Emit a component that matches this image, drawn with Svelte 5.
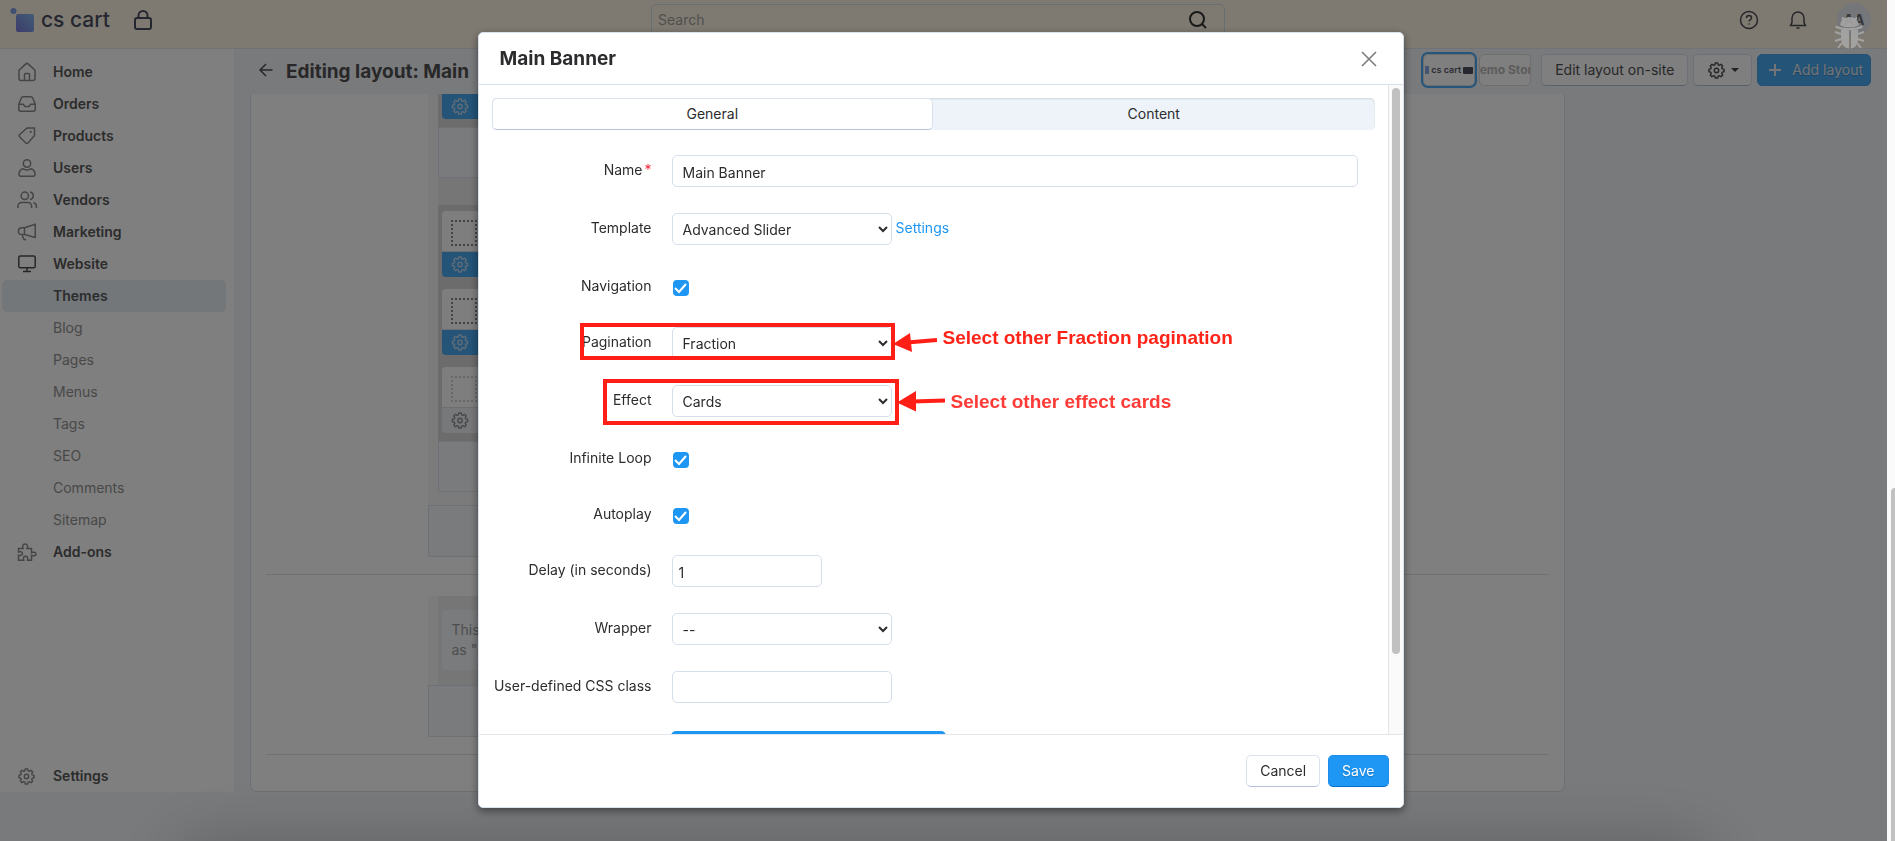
<script>
  const menu = [
    { label: 'Home', icon: 'home' },
    { label: 'Orders', icon: 'inbox' },
    { label: 'Products', icon: 'tag' },
    { label: 'Users', icon: 'user' },
    { label: 'Vendors', icon: 'users' },
    { label: 'Marketing', icon: 'horn' },
    { label: 'Website', icon: 'screen', dark: true },
    { label: 'Themes', sub: true, active: true },
    { label: 'Blog', sub: true },
    { label: 'Pages', sub: true },
    { label: 'Menus', sub: true },
    { label: 'Tags', sub: true },
    { label: 'SEO', sub: true },
    { label: 'Comments', sub: true },
    { label: 'Sitemap', sub: true },
    { label: 'Add-ons', icon: 'puzzle' }
  ];

  let tab = $state('General');
  let name = $state('Main Banner');
  let delay = $state('1');
  let cssClass = $state('');
  let navigation = $state(true);
  let loop = $state(true);
  let autoplay = $state(true);
</script>

{#snippet gear()}
  <svg class="gear" viewBox="0 0 18 18" aria-hidden="true">
    <path d="M7.3 2.9 7.7 1h2.6l.4 1.9 1.4.6 1.7-1.1 1.8 1.8-1.1 1.7.6 1.4 1.9.4v2.6l-1.9.4-.6 1.4 1.1 1.7-1.8 1.8-1.7-1.1-1.4.6-.4 1.9H7.7l-.4-1.9-1.4-.6-1.7 1.1-1.8-1.8 1.1-1.7-.6-1.4L1 10.300V7.700l1.900-.4.6-1.400-1.100-1.700 1.800-1.800 1.700 1.100z" />
    <circle cx="9" cy="9" r="2.300" />
  </svg>
{/snippet}

{#snippet chevron()}
  <svg class="chevron" viewBox="0 0 10 6" aria-hidden="true"><path d="m1 1 4 4 4-4" /></svg>
{/snippet}

{#snippet menuIcon(kind)}
  <svg class="menu-icon" viewBox="0 0 18 18" aria-hidden="true">
    {#if kind === 'home'}
      <path d="M1 7.300 7.600 1.100a2 2 0 0 1 2.800 0L17 7.300v8.200a2 2 0 0 1-2 2H3a2 2 0 0 1-2-2z" />
      <path d="M6.500 17.500v-6a1 1 0 0 1 1-1h3a1 1 0 0 1 1 1v6" />
    {:else if kind === 'inbox'}
      <path d="M.8 9.200 3.300 3a2 2 0 0 1 1.800-1.200h7.800A2 2 0 0 1 14.700 3l2.500 6.200v5a2 2 0 0 1-2 2H2.800a2 2 0 0 1-2-2z" />
      <path d="M.8 9.200h4.400c.8 0 .8 2.300 2.300 2.300h3c1.500 0 1.500-2.300 2.300-2.300h4.400" />
    {:else if kind === 'tag'}
      <path d="M9 1h7.500v7.500L10 16a1.500 1.500 0 0 1-2.200 0L1.500 9.800a1.500 1.500 0 0 1 0-2.100z" />
      <circle class="solid" cx="12.700" cy="4.900" r="1.100" />
    {:else if kind === 'user'}
      <circle cx="9" cy="4.500" r="3.700" />
      <path d="M2.800 17.200c-3.300 0-2-6.700 2.400-7.400 2 1.700 5.600 1.700 7.600 0 4.400.7 5.700 7.400 2.400 7.400z" />
    {:else if kind === 'users'}
      <circle cx="6.800" cy="4.800" r="3.700" />
      <path d="M0 17v-2a3.500 3.500 0 0 1 3.500-3.500h6.600a3.500 3.500 0 0 1 3.500 3.500v2M12 1.100c4.400.7 4.400 6.700 0 7.400M15.500 11.800A3.600 3.600 0 0 1 18.400 15v2" />
    {:else if kind === 'horn'}
      <path d="M6.500 4.800 17.200 1.300v13.200L6.500 11.500zM6.500 4.800H3.800a3.300 3.300 0 0 0 0 6.700h2.700zM4 11.500l1.500 4.200a2 2 0 0 0 2.600.6" />
    {:else if kind === 'screen'}
      <rect x=".8" y="1" width="16.400" height="11.800" rx="1.600" />
      <path d="M9 12.800v3.500M5 16.500h8" />
    {:else}
      <path d="M.5 5.500h4.600c-.7-1.200-1-4.500 2-4.500s2.700 3.300 2 4.500h4.400v4.300c1.200-.7 4.500-1 4.500 1.200s-3.300 2-4.500 1.300v4.900H9.500c.8-2.900-.2-3.900-1.900-3.900s-2.700 1-1.900 3.900H.5v-5c2.700.8 4-.3 4-1.700s-1.300-2.300-4-1.500z" />
    {/if}
  </svg>
{/snippet}

{#snippet block(muted)}
  <div class="block" class:muted>
    <div class="block-top"><span class="dots"></span></div>
    <div class="block-bar">{@render gear()}</div>
  </div>
{/snippet}

<div class="page">
  <header class="topbar">
    <div class="brand">
      <svg class="logo" viewBox="0 0 25 26" aria-hidden="true">
        <defs>
          <linearGradient id="logo-fill" x1="0" y1="1" x2="1" y2="0">
            <stop offset="0" stop-color="#7a78d8" />
            <stop offset="1" stop-color="#84b8e8" />
          </linearGradient>
        </defs>
        <circle cx="4.500" cy="4" r="3" fill="#809fe4" />
        <rect x="7" y="7" width="18" height="18" rx="2" fill="url(#logo-fill)" />
      </svg>
      <span class="brand-name">cs cart</span>
      <svg class="lock" viewBox="0 0 18 20" aria-hidden="true">
        <rect x="1" y="8" width="16" height="11" rx="2" />
        <path d="M4.500 8V5.500a4.500 4.500 0 0 1 9 0V8" />
      </svg>
    </div>
    <div class="search">
      <input type="search" placeholder="Search" aria-label="Search" />
      <svg viewBox="0 0 18 18" aria-hidden="true"><circle cx="8" cy="8" r="7" /><path d="m13 13 4 4" /></svg>
    </div>
    <div class="tools">
      <svg viewBox="0 0 20 20" aria-hidden="true">
        <circle cx="10" cy="10" r="8.500" />
        <path d="M7.500 8c0-3.200 5-3.200 5 0 0 1.700-2.500 1.800-2.500 3.600" /><circle class="solid" cx="10" cy="14" r=".8" />
      </svg>
      <svg viewBox="0 0 20 20" aria-hidden="true">
        <path d="M2.500 15.500 4 12.500V8a6 6 0 0 1 12 0v4.500l1.500 3zM8.500 18h3" />
      </svg>
      <span class="avatar">AA</span>
    </div>
  </header>

  <div class="columns">
    <nav class="sidebar">
      {#each menu as item}
        <a href="#top" class="item" class:sub={item.sub} class:active={item.active} class:dark={item.dark}>
          <span class="slot">{#if item.icon}{@render menuIcon(item.icon)}{/if}</span>{item.label}
        </a>
      {/each}
      <a href="#top" class="item last"><span class="slot">{@render gear()}</span>Settings</a>
    </nav>

    <main>
      <div class="actions">
        <svg class="back" viewBox="0 0 14 14" aria-hidden="true"><path d="M13.500 7H1m6-6L1 7l6 6" /></svg>
        <h1>Editing layout: Main</h1>
        <div class="buttons">
          <div class="thumbs">
            <button class="thumb selected"><i class="chip"></i><b>cs cart</b><i class="tagline"></i></button>
            <button class="thumb"><span>Demo Store</span></button>
          </div>
          <button class="btn">Edit layout on-site</button>
          <button class="btn tool" aria-label="Layout tools">{@render gear()}<i class="caret"></i></button>
          <button class="btn primary add">
            <svg viewBox="0 0 12 12" aria-hidden="true"><path d="M6 0v12M0 6h12" /></svg>Add layout
          </button>
        </div>
      </div>

      <div class="card">
        <section>
          <div class="container">
            <div class="grid">
              <div class="grid-body first"><div class="block-bar">{@render gear()}</div></div>
              <div class="strip"></div>
              <div class="space"></div>
              <div class="grid-body">
                {@render block(false)}
                {@render block(false)}
                {@render block(true)}
              </div>
              <div class="strip"></div>
            </div>
            <div class="strip end"></div>
          </div>
        </section>
        <section>
          <div class="container footer-area">
            <div class="grid"><p class="note">This<br />as "I</p></div>
            <div class="strip end"></div>
          </div>
        </section>
      </div>
    </main>
  </div>
  <div class="bottom-bar"></div>
</div>

<div class="overlay">
  <div class="modal" role="dialog" aria-labelledby="modal-title">
    <header class="modal-head">
      <h2 id="modal-title">Main Banner</h2>
      <button class="close" aria-label="Close"><svg viewBox="0 0 16 16"><path d="m1 1 14 14M15 1 1 15" /></svg></button>
    </header>

    <div class="modal-body">
      <div class="pane">
        <div class="tabs">
          {#each ['General', 'Content'] as label}
            <button class:current={tab === label} onclick={() => (tab = label)}>{label}</button>
          {/each}
        </div>

        <form>
          <div class="row">
            <label for="f-name">Name<span class="star">*</span></label>
            <input id="f-name" class="text wide" bind:value={name} />
          </div>
          <div class="row">
            <label for="f-template">Template</label>
            <div class="select"><select id="f-template"><option>Advanced Slider</option></select>{@render chevron()}</div>
            <a class="link" href="#top">Settings</a>
          </div>
          <div class="row short">
            <label for="f-nav">Navigation</label>
            <input id="f-nav" type="checkbox" bind:checked={navigation} />
          </div>
          <div class="row">
            <label for="f-pagination">Pagination</label>
            <div class="select"><select id="f-pagination"><option>Fraction</option></select>{@render chevron()}</div>
          </div>
          <div class="row">
            <label for="f-effect">Effect</label>
            <div class="select"><select id="f-effect"><option>Cards</option></select>{@render chevron()}</div>
          </div>
          <div class="row short">
            <label for="f-loop">Infinite Loop</label>
            <input id="f-loop" type="checkbox" bind:checked={loop} />
          </div>
          <div class="row short">
            <label for="f-auto">Autoplay</label>
            <input id="f-auto" type="checkbox" bind:checked={autoplay} />
          </div>
          <div class="row">
            <label for="f-delay">Delay (in seconds)</label>
            <input id="f-delay" class="text small" bind:value={delay} />
          </div>
          <div class="row">
            <label for="f-wrapper">Wrapper</label>
            <div class="select"><select id="f-wrapper"><option>--</option></select>{@render chevron()}</div>
          </div>
          <div class="row">
            <label for="f-class">User-defined CSS class</label>
            <input id="f-class" class="text" bind:value={cssClass} />
          </div>
          <button type="button" class="more" aria-label="More options"></button>

          <svg class="marks" viewBox="0 0 460 280" aria-hidden="true">
            <rect x="90" y="170" width="311" height="33" />
            <rect x="113" y="226" width="292" height="42" />
            <path d="M445 185 415 187.500M453 245.500 420 246.500" />
            <path class="tip" d="m401 189 17-11 2 19zM405 247.500l19-11.500v20.500z" />
          </svg>
          <p class="hint one">Select other Fraction pagination</p>
          <p class="hint two">Select other effect cards</p>
        </form>
      </div>
      <div class="track"><div class="thumb-bar"></div></div>
    </div>

    <footer class="modal-foot">
      <button class="btn">Cancel</button>
      <button class="btn primary">Save</button>
    </footer>
  </div>
</div>

<svg class="bug" viewBox="0 0 30 34" aria-hidden="true">
  <path class="body" d="M6 10C7 8 7 3.500 11 3c3-1.500 6-1.500 9 0 4 .5 4 5 5 7-5 3-14 3-19 0z" />
  <path d="M1.500 11.500c7 3.500 20 3.500 27 0M8 2.500l2 2M23 2.500l-2 2M7 19l-6-2M24 19l6-2M7 24l-6 2M24 24l6 2M8 28l-4 5M23 28l4 5" />
  <path class="body" d="M7 14c2.500.8 5 1.200 8 1.200V33.500C10 33 7 29 7 23zM24 14c-2 .8-4.500 1.200-7 1.200V33.500c4.500-.5 7-4.500 7-10.500z" />
</svg>
<div class="page-scroll"><div></div></div>

<style>
  :global(body) {
    background: #f2f5f9;
    overflow: hidden;
  }
  :global(#app) {
    font: 14px/20px Inter, 'Noto Sans', sans-serif;
    color: #2c2c2e;
  }
  * { box-sizing: border-box; }
  svg { display: block; fill: none; stroke: currentColor; flex: none; overflow: visible; }
  .solid { fill: currentColor; stroke: none; }
  button, input, select { font: inherit; color: inherit; margin: 0; }
  h1, h2, p { margin: 0; }
  h1, h2 { font-size: 19px; line-height: 28px; font-weight: 700; }
  a { text-decoration: none; color: inherit; }

  .page { height: 100vh; margin-right: 8px; overflow: hidden; position: relative; }
  .topbar {
    display: grid;
    grid-template-columns: 1fr 574px 1fr;
    height: 49px;
    padding: 0 16px 0 5px;
    background: #fdf5e5;
    border-bottom: 1px solid #dfe4ee;
  }
  .brand { display: flex; align-items: flex-start; padding: 7px 0 0 4px; color: #4b4e60; }
  .logo { width: 25px; height: 26px; stroke: none; }
  .brand-name { font-size: 21px; line-height: 26px; font-weight: 500; margin-left: 7px; color: #4b4e60; }
  .lock { width: 18px; height: 20px; margin: 3px 0 0 24px; stroke-width: 2; }
  .search { height: 32px; margin-top: 4px; display: flex; align-items: center; border: 1px solid #d6dbe8; border-radius: 5px; padding: 0 17px 0 6px; }
  .search input { flex: 1; border: 0; padding: 0; background: none; outline: 0; }
  .search input::placeholder { color: #a3a09a; opacity: 1; }
  .search svg { width: 18px; height: 18px; stroke-width: 2; color: #333; }
  .tools { display: flex; justify-content: flex-end; align-items: flex-start; gap: 29px; padding-top: 3px; color: #4c4c50; }
  .tools svg { width: 20px; height: 20px; margin-top: 7px; stroke-width: 1.500; }
  .avatar { width: 34px; height: 34px; border-radius: 50%; background: #e9edf3; font-size: 14px; line-height: 34px; font-weight: 700; text-align: center; color: #707070; }

  .columns { display: flex; align-items: flex-start; height: calc(100% - 49px); }
  .sidebar { width: 234px; height: calc(100% - 49px); flex: none; background: #fff; padding: 7px 8px 0 2px; display: flex; flex-direction: column; }
  .item { height: 32px; line-height: 32px; display: flex; align-items: center; padding-left: 16px; gap: 17px; border-radius: 5px; font-weight: 600; color: #585858; }
  .slot { width: 18px; color: #8b8b8b; }
  .dark .slot { color: #4c4c4c; }
  .menu-icon { width: 18px; height: 18px; stroke-width: 1.500; }
  .gear { width: 18px; height: 18px; stroke-width: 1.500; stroke-linejoin: round; }
  .slot .gear { width: 17px; height: 17px; }
  .sub { font-weight: 400; color: #919191; }
  .active { font-weight: 600; color: #585858; background: #e6eef5; }
  .last { margin-top: auto; }

  main { flex: 1; min-width: 0; height: 100%; padding: 0 16px; }
  .actions { height: 45px; display: flex; align-items: flex-start; padding-left: 9px; color: #505052; }
  .back { width: 14px; height: 14px; stroke-width: 1.500; margin: 14px 13px 0 0; }
  h1 { margin-top: 9px; }
  .buttons { margin: 5px 0 0 auto; display: flex; gap: 5px; }
  .thumbs { display: flex; gap: 4px; margin-right: 5px; }
  .thumb { width: 52px; height: 32px; padding: 0; border: 1px solid #dcdcdc; border-radius: 5px; background: #fff; display: flex; align-items: center; justify-content: center; overflow: hidden; color: #b8b8b8; font-size: 12px; font-weight: 700; white-space: nowrap; }
  .thumb.selected { outline: 2px solid #4aabf4; color: #555869; font-size: 9px; gap: 2px; }
  .thumb b { font-weight: 600; }
  .chip { width: 4px; height: 8px; flex: none; background: #88abe8; }
  .tagline { width: 10px; height: 7px; flex: none; border-radius: 1px; background: #4c4f5f; }

  .btn { height: 32px; padding: 0 13px; background: #fff; border: 1px solid #dbe1ee; border-bottom-color: #b4bfdd; border-radius: 5px; display: flex; align-items: center; white-space: nowrap; }
  .btn.primary { background: #1e96f3; border-color: #1f8bea; border-bottom-color: #0a6fd4; color: #fff; text-shadow: 0 1px 1px #0003; }
  .tool { padding: 0 12px 0 14px; gap: 6px; }
  .tool .gear { stroke-width: 1.500; width: 17px; height: 17px; }
  .caret { border: 4px solid transparent; border-top-color: #444; border-bottom: 0; }
  .actions .btn.primary { background: #48a8f0; border-color: #48a0e8; margin: 0; color: #e4e8ec; }
  .add { padding: 0 7px 0 11px; gap: 11px; }
  .add svg { width: 12px; height: 12px; stroke-width: 2; }

  .card { max-width: 1315px; height: calc(100% - 94px); background: #fff; border: 1px solid #dce2ec; border-top: 0; border-radius: 0 0 6px 6px; padding: 0 15px; }
  section { border-bottom: 1px solid #e2e2e4; padding-bottom: 17px; }
  section + section { padding: 21px 0 17px; }
  .container { width: 960px; max-width: 100%; margin: 0 auto; background: #f7f7f7; }
  .grid { margin: 0 10px; background: #ededed; }
  .grid-body { background: #d9d9d9; padding: 6px 4px 8px; display: flex; flex-direction: column; gap: 12px; }
  .grid-body.first { padding-top: 0; }
  .strip { height: 51px; background: #f3f6fb; border: 1px solid #dce2ea; }
  .end { height: 52px; }
  .grid + .end { margin-top: 13px; }
  .space { height: 27px; }
  .block-top { height: 41px; padding: 9px; background: #fcfcfc; border-radius: 4px 4px 0 0; border-bottom: 1px solid #d8dde6; }
  .dots { display: block; width: 26px; height: 26px; border: 2px dotted #888; }
  .block-bar { height: 25px; padding: 4px 9px; background: #48a8f0; color: #bcd8ef; border-radius: 0 0 4px 4px; }
  .block-bar .gear { width: 18px; height: 17px; }
  .muted .block-bar { background: #eff1f4; color: #929292; }
  .muted .dots { border-color: #d0d0d0; }
  .footer-area .grid { padding: 14px 4px 15px; }
  .footer-area .grid + .end { margin-top: 0; }
  .note { background: #f4f6f9; padding: 10px; color: #9d9d9f; }
  .bottom-bar { position: absolute; top: 100%; left: 180px; right: 180px; height: 60px; box-shadow: 0 8px 70px #0004; }

  .overlay { position: fixed; inset: 0 8px 0 0; padding: 32px 6px 33px 0; background: #00000080; display: flex; justify-content: center; }
  .modal { width: 926px; max-width: 100%; background: #fff; border: 1px solid #d8e1ec; border-radius: 5px; box-shadow: 0 3px 8px #0007; display: flex; flex-direction: column; overflow: hidden; }
  .modal-head { height: 52px; flex: none; padding: 0 26px 0 21px; display: flex; align-items: center; justify-content: space-between; border-bottom: 1px solid #d5deeb; }
  .close { border: 0; background: none; padding: 0; color: #7c7c7c; }
  .close svg { width: 16px; height: 16px; stroke-width: 1.600; }
  .modal-body { flex: 1; min-height: 0; display: flex; overflow: hidden; }
  .pane { flex: 1; min-width: 0; padding: 13px 13px 0; }
  .track { width: 15px; border-left: 1px solid #e5e5e5; background: #fafafa; padding: 3px 2px 3px 3px; }
  .thumb-bar { width: 8px; height: 88%; border-radius: 4px; background: #c1c1c1; }

  .tabs { display: flex; height: 32px; background: #edf3f8; border-radius: 5px; box-shadow: inset 0 1px 2px #0f2a4022; }
  .tabs button { flex: 1; border: 1px solid transparent; background: none; border-radius: 5px; padding: 0; }
  .tabs .current { background: #fff; border-color: #d8e1ed; border-bottom-color: #b3c0de; }

  form { position: relative; margin-top: 25px; }
  .row { display: flex; align-items: flex-start; min-height: 32px; margin-bottom: 26px; padding-right: 17px; }
  .short { min-height: 30px; }
  label { width: 160px; flex: none; margin-right: 20px; padding-top: 5px; text-align: right; }
  .star { color: #f0283c; margin-left: 2px; }
  .text { width: 220px; height: 32px; border: 1px solid #d5deeb; border-radius: 5px; padding: 2px 10px 0; background: #fff; }
  .wide { flex: 1; }
  .small { width: 150px; padding-left: 6px; }
  .select { position: relative; width: 220px; }
  select { appearance: none; width: 100%; height: 32px; border: 1px solid #d5deeb; border-radius: 5px; padding: 2px 24px 0 10px; background: #fff; }
  .chevron { position: absolute; right: 4px; top: 13px; width: 10px; height: 6px; stroke-width: 2; pointer-events: none; }
  .link { color: #1e96f3; padding: 5px 0 0 4px; }
  input[type='checkbox'] { appearance: none; width: 16px; height: 16px; margin: 9px 0 0 1px; border-radius: 4px; border: 1px solid #b9c4d4; }
  input[type='checkbox']:checked { border: 0; background: #1e96f3 url("data:image/svg+xml,%3Csvg xmlns='http://www.w3.org/2000/svg' viewBox='0 0 16 16'%3E%3Cpath d='m2 8 4 4 7-8' fill='none' stroke='white' stroke-width='2'/%3E%3C/svg%3E"); }
  .more { display: block; width: 275px; height: 32px; margin: 28px 0 0 179px; border: 0; border-radius: 5px; background: #1e96f3; }

  .marks { position: absolute; left: 0; top: 0; width: 460px; height: 280px; color: #ff1f17; stroke-width: 4; pointer-events: none; }
  .tip { fill: currentColor; stroke: none; }
  .hint { position: absolute; font: bold 19px/22px 'Liberation Sans', Arial, sans-serif; white-space: nowrap; }
  .one { left: 451px; top: 172px; color: #ff2318; }
  .two { left: 459px; top: 236px; color: #ff3b37; }

  .modal-foot { flex: none; display: flex; justify-content: flex-end; gap: 8px; padding: 20px 14px; border-top: 1px solid #e4e7ec; }

  .bug { position: fixed; top: 15px; right: 31px; width: 30px; height: 34px; color: #a6a6a6; stroke-width: 2; opacity: 0.9; }
  .body { fill: currentColor; stroke: none; }
  .page-scroll { position: fixed; inset: 0 0 0 auto; width: 8px; padding-left: 4px; background: #fafafa; display: flex; align-items: flex-end; }
  .page-scroll div { width: 100%; height: 42%; background: #c1c1c1; border-radius: 4px 0 0 0; }
</style>
